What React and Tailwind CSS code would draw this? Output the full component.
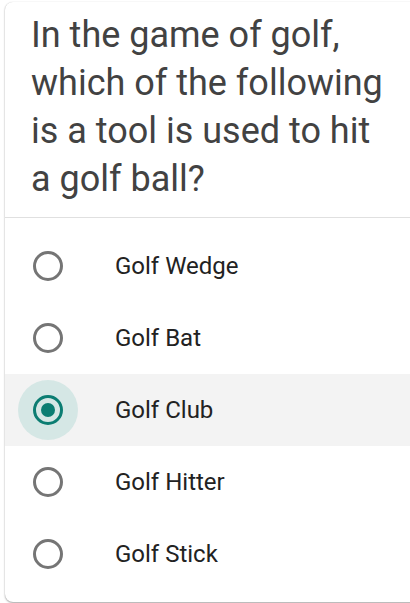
import { useState } from "react"

const OPTIONS = ["Golf Wedge", "Golf Bat", "Golf Club", "Golf Hitter", "Golf Stick"]

function Radio({ checked }) {
    return (
        <div className={`w-[60px] h-[60px] rounded-full flex items-center justify-center ${checked ? "bg-[#d5e7e5]" : ""}`}>
            <div className={`w-[30px] h-[30px] rounded-full border-[3px] flex items-center justify-center ${checked ? "border-[#0b7d72]" : "border-[#757575]"}`}>
                {checked && <div className="w-[14px] h-[14px] rounded-full bg-[#0b7d72]"></div>}
            </div>
        </div>
    )
}

export default function App() {
    const [selected, setSelected] = useState(2)

    return (
        <div className="w-[410px] h-[603px] bg-white overflow-hidden pt-[2px] pl-[5px]" style={{ fontFamily: "Roboto, 'Liberation Sans', sans-serif" }}>
            <div className="w-[420px] h-[600px] bg-white rounded-l-[8px] shadow-[0_1px_2px_rgba(0,0,0,0.35),0_0_1px_rgba(0,0,0,0.15)]">
                {/* question */}
                <div className="pl-[26px] pt-[9px] pb-[14px] border-b border-[#e0e0e0]">
                    <h1 className="w-[356px] text-[36px] leading-[48px] text-[#424242] font-normal">
                        In the game of golf, which of the following is a tool is used to hit a golf ball?
                    </h1>
                </div>

                {/* options */}
                <div className="pt-[12px]">
                    {OPTIONS.map((opt, i) => (
                        <div
                            key={opt}
                            onClick={() => setSelected(i)}
                            className={`h-[72px] flex items-center pl-[13px] ${selected === i ? "bg-[#f3f3f3]" : ""}`}
                        >
                            <Radio checked={selected === i} />
                            <span className="ml-[37px] text-[24px] text-[#222222]">{opt}</span>
                        </div>
                    ))}
                </div>
            </div>
        </div>
    )
}
